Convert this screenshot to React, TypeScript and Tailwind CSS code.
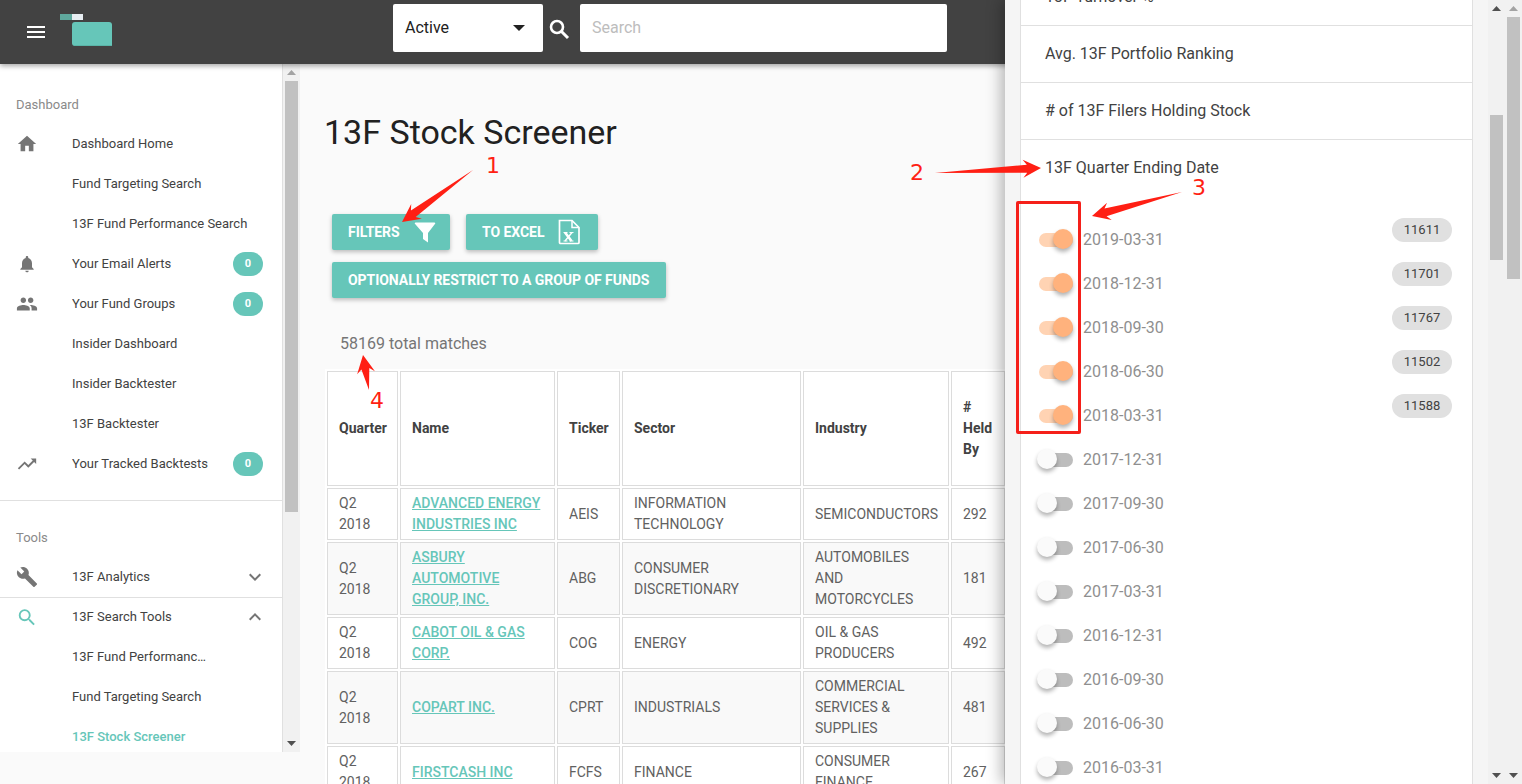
import {
  MdBuild,
  MdExpandLess,
  MdExpandMore,
  MdHome,
  MdMenu,
  MdNotifications,
  MdPeople,
  MdSearch,
  MdTrendingUp,
} from 'react-icons/md';
import type { ReactNode } from 'react';

// ─── Data ─────────────────────────────────────────────────────────────────────
const rows = [
  { name: 'ADVANCED ENERGY INDUSTRIES INC', ticker: 'AEIS', sector: 'INFORMATION TECHNOLOGY', industry: 'SEMICONDUCTORS', held: 292 },
  { name: 'ASBURY AUTOMOTIVE GROUP, INC.', ticker: 'ABG', sector: 'CONSUMER DISCRETIONARY', industry: 'AUTOMOBILES AND MOTORCYCLES', held: 181 },
  { name: 'CABOT OIL & GAS CORP.', ticker: 'COG', sector: 'ENERGY', industry: 'OIL & GAS PRODUCERS', held: 492 },
  { name: 'COPART INC.', ticker: 'CPRT', sector: 'INDUSTRIALS', industry: 'COMMERCIAL SERVICES & SUPPLIES', held: 481 },
  { name: 'FIRSTCASH INC', ticker: 'FCFS', sector: 'FINANCE', industry: 'CONSUMER FINANCE', held: 267 },
];

const dates = [
  { date: '2019-03-31', count: 11611 },
  { date: '2018-12-31', count: 11701 },
  { date: '2018-09-30', count: 11767 },
  { date: '2018-06-30', count: 11502 },
  { date: '2018-03-31', count: 11588 },
  { date: '2017-12-31' },
  { date: '2017-09-30' },
  { date: '2017-06-30' },
  { date: '2017-03-31' },
  { date: '2016-12-31' },
  { date: '2016-09-30' },
  { date: '2016-06-30' },
  { date: '2016-03-31' },
];

// annotation arrows: tail -> tip
const arrows = [
  [473, 170, 402, 222],
  [935, 173, 1041, 168],
  [1182, 192, 1092, 216],
  [369, 390, 363, 355],
];

function arrowPoints([x1, y1, x2, y2]: number[]) {
  const len = Math.hypot(x2 - x1, y2 - y1);
  const ux = (x2 - x1) / len;
  const uy = (y2 - y1) / len;
  const at = (back: number, side: number) =>
    `${x2 - ux * back - uy * side},${y2 - uy * back + ux * side}`;
  return [
    `${x1},${y1}`,
    at(14, 4),
    at(18, 9),
    `${x2},${y2}`,
    at(18, -9),
    at(14, -4),
  ].join(' ');
}

// ─── Sidebar ──────────────────────────────────────────────────────────────────
function NavItem({
  icon,
  label,
  badge,
  chevron,
  active,
}: {
  icon?: ReactNode;
  label: string;
  badge?: boolean;
  chevron?: ReactNode;
  active?: boolean;
}) {
  return (
    <div className="flex h-10 items-center pl-4">
      <div className="flex w-[22px] shrink-0 justify-center text-[#757575]">{icon}</div>
      <span
        className={`ml-[34px] w-[136px] truncate text-[13px] ${active ? 'font-medium text-[#66c6b9]' : 'text-[#424242]'}`}
      >
        {label}
      </span>
      {badge && (
        <span className="ml-auto mr-[19px] flex h-6 w-[30px] items-center justify-center rounded-full bg-[#66c6b9] text-[11px] font-bold text-white">
          0
        </span>
      )}
      {chevron && <span className="ml-auto mr-[15px] text-[#757575]">{chevron}</span>}
    </div>
  );
}

function ScrollArrow({ up, dim }: { up?: boolean; dim?: boolean }) {
  return (
    <svg width="9" height="5" viewBox="0 0 9 5" className={dim ? 'fill-[#a3a3a3]' : 'fill-[#505050]'}>
      <polygon points={up ? '4.5,0 9,5 0,5' : '0,0 9,0 4.5,5'} />
    </svg>
  );
}

function Sidebar() {
  return (
    <aside className="flex h-[688px] w-[300px] shrink-0 bg-white">
      <div className="w-[283px] shrink-0 overflow-hidden border-r border-[#e0e0e0] pt-[21px]">
        <p className="h-[39px] pl-4 text-[13px] leading-[40px] text-[#8a8a8a]">Dashboard</p>
        <NavItem icon={<MdHome size={22} />} label="Dashboard Home" />
        <NavItem label="Fund Targeting Search" />
        <div className="flex h-10 items-center pl-[72px] text-[13px] text-[#424242]">13F Fund Performance Search</div>
        <NavItem icon={<MdNotifications size={20} />} label="Your Email Alerts" badge />
        <NavItem icon={<MdPeople size={24} />} label="Your Fund Groups" badge />
        <NavItem label="Insider Dashboard" />
        <NavItem label="Insider Backtester" />
        <NavItem label="13F Backtester" />
        <NavItem icon={<MdTrendingUp size={22} />} label="Your Tracked Backtests" badge />
        <div className="mt-4 h-px bg-[#e0e0e0]" />
        <p className="mt-[17px] h-[39px] pl-4 text-[13px] leading-[40px] text-[#8a8a8a]">Tools</p>
        <div className="border-b border-[#e0e0e0]">
          <NavItem icon={<MdBuild size={26} />} label="13F Analytics" chevron={<MdExpandMore size={24} className="block" />} />
        </div>
        <div className="-mt-px">
          <NavItem
            icon={<MdSearch size={27} className="text-[#66c6b9]" />}
            label="13F Search Tools"
            chevron={<MdExpandLess size={24} className="block" />}
          />
        </div>
        <NavItem label="13F Fund Performance Search" />
        <NavItem label="Fund Targeting Search" />
        <NavItem label="13F Stock Screener" active />
      </div>
      <div className="flex w-[17px] shrink-0 flex-col items-center bg-[#f1f1f1]">
        <div className="flex h-[17px] items-center">
          <ScrollArrow up dim />
        </div>
        <div className="h-[431px] w-[13px] bg-[#c1c1c1]" />
        <div className="mt-auto flex h-[17px] items-center">
          <ScrollArrow />
        </div>
      </div>
    </aside>
  );
}

// ─── Main content ─────────────────────────────────────────────────────────────
function ActionButton({ children, className = '' }: { children: ReactNode; className?: string }) {
  return (
    <button
      className={`flex h-9 items-center rounded-[2px] bg-[#66c6b9] px-4 text-[14px] font-bold uppercase tracking-[-0.05px] text-white shadow-[0_2px_4px_rgba(0,0,0,0.25)] ${className}`}
    >
      {children}
    </button>
  );
}

function StockTable() {
  const th = 'border border-[#dcdcdc] px-[11px] text-left align-middle font-bold text-[#424242]';
  const td = 'border border-[#dcdcdc] px-[11px] py-1 align-middle';
  return (
    <table className="w-[830px] table-fixed border-separate border-spacing-[2px] bg-white text-[14px] leading-[21px] text-[#616161]">
      <colgroup>
        <col className="w-[71px]" />
        <col className="w-[155px]" />
        <col className="w-[63px]" />
        <col className="w-[179px]" />
        <col className="w-[146px]" />
        <col className="w-[54px]" />
        <col />
      </colgroup>
      <thead>
        <tr className="h-[115px]">
          <th className={th}>Quarter</th>
          <th className={th}>Name</th>
          <th className={th}>Ticker</th>
          <th className={th}>Sector</th>
          <th className={th}>Industry</th>
          <th className={th}># Held By</th>
          <th className={th}>Avg</th>
        </tr>
      </thead>
      <tbody>
        {rows.map((r, i) => (
          <tr key={r.ticker} className={i % 2 === 1 ? 'bg-[#f9f9f9]' : ''}>
            <td className={td}>Q2 2018</td>
            <td className={td}>
              <a className="font-medium text-[#66c6b9] underline">{r.name}</a>
            </td>
            <td className={td}>{r.ticker}</td>
            <td className={td}>{r.sector}</td>
            <td className={td}>{r.industry}</td>
            <td className={td}>{r.held}</td>
            <td className={td} />
          </tr>
        ))}
      </tbody>
    </table>
  );
}

// ─── Filter drawer ────────────────────────────────────────────────────────────
function DateToggle({ on }: { on: boolean }) {
  return (
    <span className="relative ml-[18px] block h-[14px] w-[34px] shrink-0">
      <span className={`block h-full w-full rounded-full ${on ? 'bg-[#ffd3b3]' : 'bg-[#bdbdbd]'}`} />
      <span
        className={`absolute -top-[4px] h-5 w-5 rounded-full shadow-[0_3px_4px_rgba(0,0,0,0.3)] ${on ? 'right-0 bg-[#ffb27d]' : '-left-[2px] bg-[#fafafa]'}`}
      />
    </span>
  );
}

function FilterDrawer() {
  return (
    <div className="absolute bottom-0 right-0 top-0 z-20 flex w-[517px] bg-[#f5f5f5] shadow-[-4px_0_14px_rgba(0,0,0,0.28)]">
      <div className="ml-[15px] h-full w-[453px] shrink-0 overflow-hidden border-x border-[#e0e0e0] bg-white text-[16px] text-[#424242]">
        <div className="-mt-[31px] flex h-[57px] items-center border-b border-[#e0e0e0] pl-6">13F Turnover %</div>
        <div className="flex h-[57px] items-center border-b border-[#e0e0e0] pl-6">Avg. 13F Portfolio Ranking</div>
        <div className="flex h-[57px] items-center border-b border-[#e0e0e0] pl-6">
          # of 13F Filers Holding Stock
        </div>
        <div className="flex h-[56px] items-center pl-6">13F Quarter Ending Date</div>
        <div className="mt-[22px]">
          {dates.map((d) => (
            <div key={d.date} className="flex h-11 items-center">
              <DateToggle on={d.count !== undefined} />
              <span className="ml-[10px] text-[#8f8f8f]">{d.date}</span>
              {d.count !== undefined && (
                <span className="ml-auto mr-5 flex h-6 w-[60px] items-center justify-center self-start rounded-full bg-[#e0e0e0] text-[13px]">
                  {d.count}
                </span>
              )}
            </div>
          ))}
        </div>
      </div>
      <div className="ml-[15px] flex w-[17px] shrink-0 flex-col items-center bg-[#f1f1f1]">
        <div className="flex h-[17px] items-center">
          <ScrollArrow up />
        </div>
        <div className="mt-[98px] h-[145px] w-[13px] bg-[#c1c1c1]" />
        <div className="mt-auto flex h-[17px] items-center">
          <ScrollArrow />
        </div>
      </div>
      <div className="flex w-[17px] shrink-0 flex-col items-center bg-[#f1f1f1]">
        <div className="flex h-[17px] items-center">
          <ScrollArrow up dim />
        </div>
        <div className="h-[262px] w-[13px] bg-[#c1c1c1]" />
        <div className="mt-auto flex h-[17px] items-center">
          <ScrollArrow />
        </div>
      </div>
    </div>
  );
}

// ─── Page ─────────────────────────────────────────────────────────────────────
export default function App() {
  return (
    <div className="relative h-[784px] overflow-hidden bg-[#fafafa] font-['Roboto',sans-serif]">
      <header className="relative z-10 flex h-16 items-center bg-[#424242] shadow-[0_2px_5px_rgba(0,0,0,0.35)]">
        <MdMenu size={24} className="ml-6 text-white" />
        <svg width="54" height="34" viewBox="0 0 54 34" className="ml-[12px] -mt-[3px]">
          <rect x="0" y="0" width="12" height="6" fill="#5fa89d" />
          <rect x="12" y="0" width="11" height="6" fill="#e8eef2" />
          <path d="M12 11a3 3 0 0 1 3-3h34a3 3 0 0 1 3 3v21H15a3 3 0 0 1-3-3z" fill="#66c6b9" />
          <rect x="14" y="31" width="38" height="1" fill="#5ab5a8" />
        </svg>
        <div className="ml-[279px] -mt-2 flex h-12 w-[150px] items-center rounded-[2px] bg-white pl-3 pr-[18px] text-[16px] text-[#212121]">
          Active
          <svg width="12" height="6" viewBox="0 0 12 6" className="ml-auto fill-[#212121]">
            <polygon points="0,0 12,0 6,6" />
          </svg>
        </div>
        <svg width="25" height="25" viewBox="0 0 25 25" fill="none" stroke="white" className="ml-[3px] -mt-2 shrink-0">
          <circle cx="11" cy="11" r="6" strokeWidth="2.6" />
          <path d="M15.5 15.5L22 22" strokeWidth="3" />
        </svg>
        <div className="ml-[9px] -mt-2 flex h-12 w-[367px] items-center rounded-[2px] bg-white pl-3 text-[16px] text-[#bdbdbd]">
          Search
        </div>
      </header>

      <div className="flex">
        <Sidebar />
        <main className="min-w-0 flex-1 overflow-hidden pl-[25px]">
          <h1 className="-ml-px mt-[48px] text-[34px] leading-10 text-[#212121]">13F Stock Screener</h1>
          <div className="mt-[62px] flex w-[360px] flex-wrap gap-x-4 gap-y-3 pl-[7px]">
            <ActionButton className="w-[118px]">
              Filters
              <svg width="24" height="24" viewBox="0 0 24 24" className="ml-[13px] shrink-0 fill-white">
                <path d="M2.5 2.5h19a.8.8 0 0 1 .6 1.3L15 13v9.5l-5-3.5v-6L1.9 3.8a.8.8 0 0 1 .6-1.3z" />
              </svg>
            </ActionButton>
            <ActionButton className="w-[132px]">
              To Excel
              <svg width="24" height="26" viewBox="0 0 24 26" className="ml-[13px] shrink-0" fill="none" stroke="white">
                <path d="M2.5 1.5h12.5l7 7v15a1 1 0 0 1-1 1h-17.5a1 1 0 0 1-1-1z" strokeWidth="1.7" />
                <path d="M15 1.5v7h7" strokeWidth="1.5" />
                <path d="M8 13.5l6.5 8.5" strokeWidth="2.6" />
                <path d="M15 13.5l-7 8.5" strokeWidth="1.4" />
                <path d="M6.5 13.5h4M12.5 13.5h4M6.5 22h4M12.5 22h4" strokeWidth="1" />
              </svg>
            </ActionButton>
            <ActionButton className="w-[334px] whitespace-nowrap">Optionally restrict to a group of funds</ActionButton>
          </div>
          <p className="ml-[15px] mt-[34px] text-[16px] leading-6 text-[#757575]">58169 total matches</p>
          <div className="mt-[13px]">
            <StockTable />
          </div>
        </main>
      </div>

      <FilterDrawer />

      {/* annotations drawn on the screenshot */}
      <svg width="1522" height="784" className="pointer-events-none absolute left-0 top-0 z-30 fill-[#ff1f14]">
        {arrows.map((a) => (
          <polygon key={a.join()} points={arrowPoints(a)} />
        ))}
      </svg>
      <div className="absolute left-[1016px] top-[201px] z-30 h-[233px] w-[65px] rounded-[2px] border-[3px] border-[#f5201a]" />
      <span className="absolute left-[486px] top-[154px] z-30 font-['DejaVu_Sans',sans-serif] text-[22px] leading-6 text-[#ff1f14]">1</span>
      <span className="absolute left-[910px] top-[161px] z-30 font-['DejaVu_Sans',sans-serif] text-[22px] leading-6 text-[#ff1f14]">2</span>
      <span className="absolute left-[1192px] top-[176px] z-30 font-['DejaVu_Sans',sans-serif] text-[22px] leading-6 text-[#ff1f14]">3</span>
      <span className="absolute left-[370px] top-[389px] z-30 font-['DejaVu_Sans',sans-serif] text-[22px] leading-6 text-[#ff1f14]">4</span>
    </div>
  );
}
